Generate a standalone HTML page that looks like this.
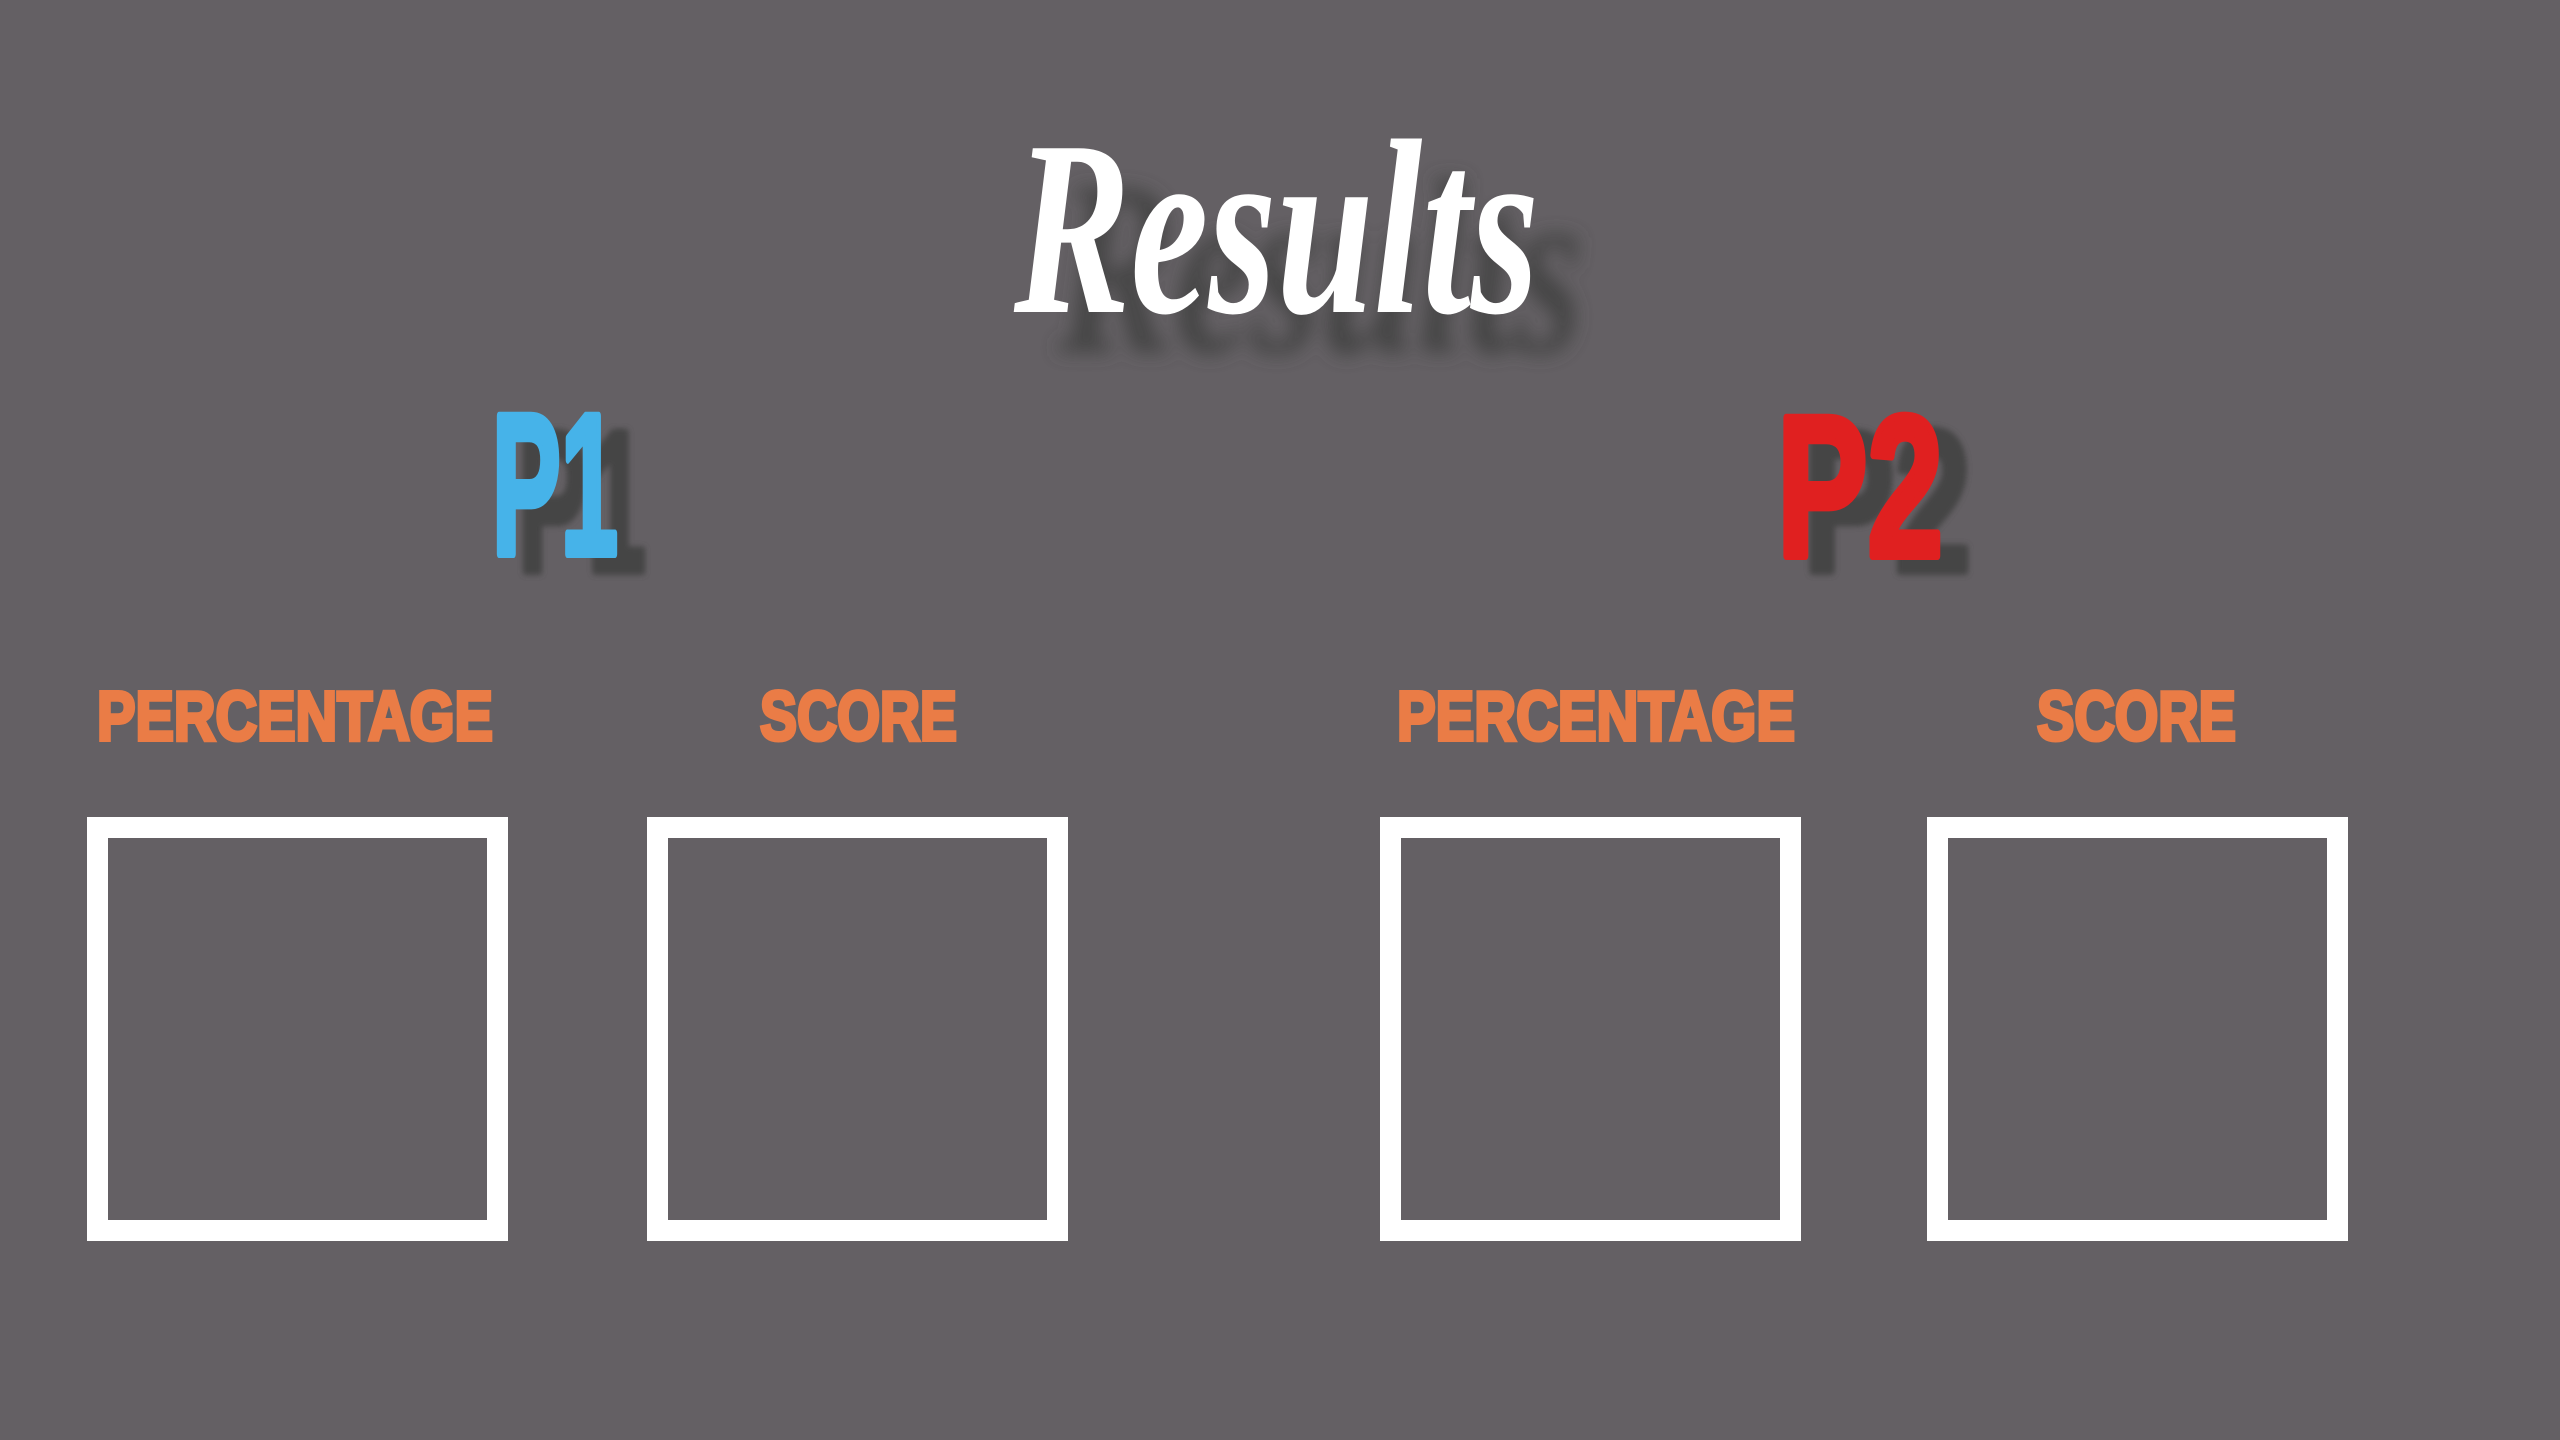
<!DOCTYPE html>
<html><head><meta charset="utf-8"><style>
html,body{margin:0;padding:0;background:#646064;width:2560px;height:1440px;overflow:hidden}
svg{display:block}
</style></head><body>
<svg width="2560" height="1440" viewBox="0 0 2560 1440" xmlns="http://www.w3.org/2000/svg">
<defs>
<filter id="b1" x="-20%" y="-40%" width="140%" height="180%"><feGaussianBlur stdDeviation="9"/></filter>
<filter id="b2" x="-20%" y="-20%" width="140%" height="140%"><feGaussianBlur stdDeviation="3"/></filter>
</defs>
<rect width="2560" height="1440" fill="#646064"/>
<g font-family="Liberation Serif, serif" font-style="italic" font-weight="bold" font-size="250">
<text x="1058" y="352" textLength="525" lengthAdjust="spacingAndGlyphs" fill="#444" filter="url(#b1)">Results</text>
<text x="1014" y="312" textLength="525" lengthAdjust="spacingAndGlyphs" fill="#fff">Results</text>
</g>
<g font-family="Liberation Sans, sans-serif" font-weight="bold" font-size="201" stroke-width="8" stroke-linejoin="round">
<text x="518" y="571" textLength="128" lengthAdjust="spacingAndGlyphs" fill="#444" stroke="#444" filter="url(#b2)">P1</text>
<text x="492" y="554" textLength="126" lengthAdjust="spacingAndGlyphs" fill="#46b3e9" stroke="#46b3e9">P1</text>
<text x="1803" y="571" textLength="168" lengthAdjust="spacingAndGlyphs" fill="#444" stroke="#444" filter="url(#b2)">P2</text>
<text x="1777" y="556" textLength="166" lengthAdjust="spacingAndGlyphs" fill="#e02020" stroke="#e02020">P2</text>
</g>
<g font-family="Liberation Sans, sans-serif" font-weight="bold" font-size="70" fill="#ea7c46" stroke="#ea7c46" stroke-width="4">
<text x="97" y="740" textLength="396" lengthAdjust="spacingAndGlyphs">PERCENTAGE</text>
<text x="760" y="740" textLength="197" lengthAdjust="spacingAndGlyphs">SCORE</text>
<text x="1397" y="740" textLength="398" lengthAdjust="spacingAndGlyphs">PERCENTAGE</text>
<text x="2037" y="740" textLength="199" lengthAdjust="spacingAndGlyphs">SCORE</text>
</g>
<g fill="none" stroke="#fff" stroke-width="21">
<rect x="97.5" y="827.5" width="400" height="403"/>
<rect x="657.5" y="827.5" width="400" height="403"/>
<rect x="1390.5" y="827.5" width="400" height="403"/>
<rect x="1937.5" y="827.5" width="400" height="403"/>
</g>
</svg>
</body></html>
